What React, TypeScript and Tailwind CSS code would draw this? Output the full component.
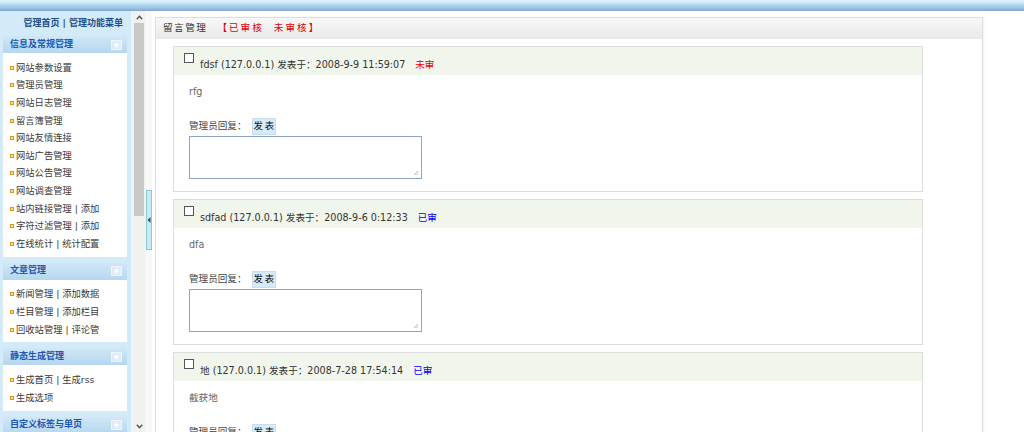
import React from "react";

type MenuGroup = {
  title: string;
  items: string[][];
};

const menus: MenuGroup[] = [
  {
    title: "信息及常规管理",
    items: [
      ["网站参数设置"],
      ["管理员管理"],
      ["网站日志管理"],
      ["留言簿管理"],
      ["网站友情连接"],
      ["网站广告管理"],
      ["网站公告管理"],
      ["网站调查管理"],
      ["站内链接管理", "添加"],
      ["字符过滤管理", "添加"],
      ["在线统计", "统计配置"],
    ],
  },
  {
    title: "文章管理",
    items: [
      ["新闻管理", "添加数据"],
      ["栏目管理", "添加栏目"],
      ["回收站管理", "评论管"],
    ],
  },
  {
    title: "静态生成管理",
    items: [["生成首页", "生成rss"], ["生成选项"]],
  },
  {
    title: "自定义标签与单页",
    items: [],
  },
];

const messages = [
  { id: 1, name: "fdsf", ip: "127.0.0.1", date: "2008-9-9 11:59:07", body: "rfg", checked: false },
  { id: 2, name: "sdfad", ip: "127.0.0.1", date: "2008-9-6 0:12:33", body: "dfa", checked: true },
  { id: 3, name: "地", ip: "127.0.0.1", date: "2008-7-28 17:54:14", body: "截获地", checked: true },
];

function PlusBox() {
  return (
    <svg width="11" height="10" viewBox="0 0 11 10" className="shrink-0">
      <rect x="0.5" y="0.5" width="10" height="9" fill="#dcecf9" stroke="#eef6fc" />
      <path d="M5.5 2.5v5M3 5h5" stroke="#ffffff" strokeWidth="1.6" />
    </svg>
  );
}

function Sidebar() {
  return (
    <div className="w-[131px] shrink-0 overflow-hidden bg-[#d3eaf8] pl-[3px] pr-[4px] flex flex-col">
      {/* ── Sidebar title ────────────────────────── */}
      <div className="h-[25px] shrink-0 flex items-center justify-end pr-[4px] text-[9px] font-bold text-[#1f4d86] whitespace-nowrap">
        管理首页 | 管理功能菜单
      </div>

      {menus.map((group) => (
        <div key={group.title} className="mb-[6px] shrink-0">
          <div className="h-[17px] flex items-center justify-between pl-[7px] pr-[5px] bg-[linear-gradient(to_bottom,#d0e7f7,#b6d7ef)]">
            <span className="text-[9px] font-bold text-[#1b56b0] whitespace-nowrap">{group.title}</span>
            <PlusBox />
          </div>
          {group.items.length > 0 && (
            <div className="bg-white pt-[6px] pb-[4px] pl-[7px]">
              {group.items.map((item) => (
                <div key={item.join("|")} className="h-[17.6px] flex items-center gap-[2px] whitespace-nowrap">
                  <span className="w-[4px] h-[4px] border border-[#e39420] bg-[#fbd98a] shrink-0" />
                  <span className="text-[9.3px] text-[#3a3a3a]">{item.join(" | ")}</span>
                </div>
              ))}
            </div>
          )}
        </div>
      ))}
    </div>
  );
}

function ScrollBar() {
  return (
    <div className="w-[14px] shrink-0 flex">
      <div className="w-[2px] bg-[#eef4f8]" />
      <div className="w-[12px] bg-[#f1f1f1] flex flex-col">
        <div className="h-[12px] shrink-0 flex items-center justify-center">
          <svg width="7" height="5" viewBox="0 0 7 5">
            <path d="M0.8 4.2 3.5 1.3 6.2 4.2" fill="none" stroke="#505050" strokeWidth="1.4" />
          </svg>
        </div>
        <div className="mx-[1px] h-[193px] shrink-0 bg-[#c8c8c8]" />
        <div className="flex-1" />
        <div className="h-[12px] shrink-0 flex items-center justify-center">
          <svg width="7" height="5" viewBox="0 0 7 5">
            <path d="M0.8 0.8 3.5 3.7 6.2 0.8" fill="none" stroke="#505050" strokeWidth="1.4" />
          </svg>
        </div>
      </div>
    </div>
  );
}

function Splitter() {
  return (
    <div className="w-[7px] shrink-0 bg-[#f8f8f8] flex flex-col">
      <div className="mt-[179px] h-[60px] shrink-0 ml-[1px] border border-[#86c9d4] bg-[#c8ecf1] flex items-center justify-center">
        <svg width="4" height="6" viewBox="0 0 4 6">
          <path d="M3.5 0 0.5 3 3.5 6Z" fill="#2f4f5f" />
        </svg>
      </div>
    </div>
  );
}

function MessageCard({ msg }: { msg: (typeof messages)[number] }) {
  return (
    <div className="w-[750px] h-[146px] shrink-0 border border-[#dcdcdc] bg-white">
      {/* Header */}
      <div className="h-[28px] bg-[#f1f6ec] flex items-start pl-[10px] whitespace-nowrap">
        <span className="mt-[6px] w-[10px] h-[10px] border border-[#555] bg-white shrink-0" />
        <span className="ml-[6px] mt-[12px] text-[9.6px] leading-[12px] text-[#333]">
          {msg.name} ({msg.ip}) 发表于：{msg.date}
        </span>
        <span
          className={
            msg.checked
              ? "ml-[10px] mt-[12px] text-[9.6px] leading-[12px] text-[#0000ee]"
              : "ml-[10px] mt-[12px] text-[9.6px] leading-[12px] text-[#ee0000]"
          }
        >
          {msg.checked ? "已审" : "未审"}
        </span>
      </div>

      {/* Body */}
      <div className="pl-[15px] pt-[11px]">
        <p className="text-[9.6px] leading-[12px] text-[#666]">{msg.body}</p>
        <div className="mt-[20px] h-[17px] flex items-center whitespace-nowrap">
          <span className="text-[9.6px] text-[#444]">管理员回复：</span>
          <button className="ml-[5px] w-[24px] h-[17px] border border-[#c6def0] bg-[#d6eaf8] text-[9.4px] text-[#111] flex items-center justify-center tracking-[-0.5px]">
            发 表
          </button>
        </div>
        <div className="mt-[1px] relative w-[233px] h-[43px] border border-[#8da7c2] bg-white">
          <svg width="6" height="6" viewBox="0 0 6 6" className="absolute right-[2px] bottom-[2px]">
            <path d="M5 1 1 5M5 3.5 3.5 5" stroke="#9a9a9a" strokeWidth="0.8" />
          </svg>
        </div>
      </div>
    </div>
  );
}

function MainPanel() {
  return (
    <div className="flex-1 min-w-0 bg-white pl-[3px] pt-[6px]">
      <div className="w-[828px] border border-[#dedede] shadow-[1px_0_2px_rgba(0,0,0,0.06)]">
        {/* ── Header ────────────────────────────── */}
        <div className="h-[21px] flex items-center pl-[7px] bg-[linear-gradient(to_bottom,#f8f8f8,#e9e9e9)] whitespace-nowrap">
          <span className="text-[9.6px] tracking-[1.5px] text-[#333]">留言管理</span>
          <span className="ml-[10px] text-[9.6px] tracking-[2px] text-[#e00000]">【已审核&nbsp;&nbsp;未审核】</span>
        </div>

        {/* ── Messages ──────────────────────────── */}
        <div className="pl-[17px] pt-[7px] flex flex-col gap-[7px]">
          {messages.map((msg) => (
            <MessageCard key={msg.id} msg={msg} />
          ))}
        </div>
      </div>
    </div>
  );
}

export default function App() {
  return (
    <div className="w-[1024px] h-[432px] overflow-hidden bg-white flex flex-col font-['DejaVu_Sans','Noto_Sans_CJK_SC',sans-serif]">
      {/* top bar */}
      <div className="h-[11px] shrink-0 bg-[linear-gradient(to_bottom,#e0f5fd_0px,#c9e9f9_3px,#b0d5ef_5px,#9dc4e4_8px,#7ea6c9_11px)]" />
      <div className="flex flex-1 min-h-0">
        <Sidebar />
        <ScrollBar />
        <Splitter />
        <MainPanel />
      </div>
    </div>
  );
}
